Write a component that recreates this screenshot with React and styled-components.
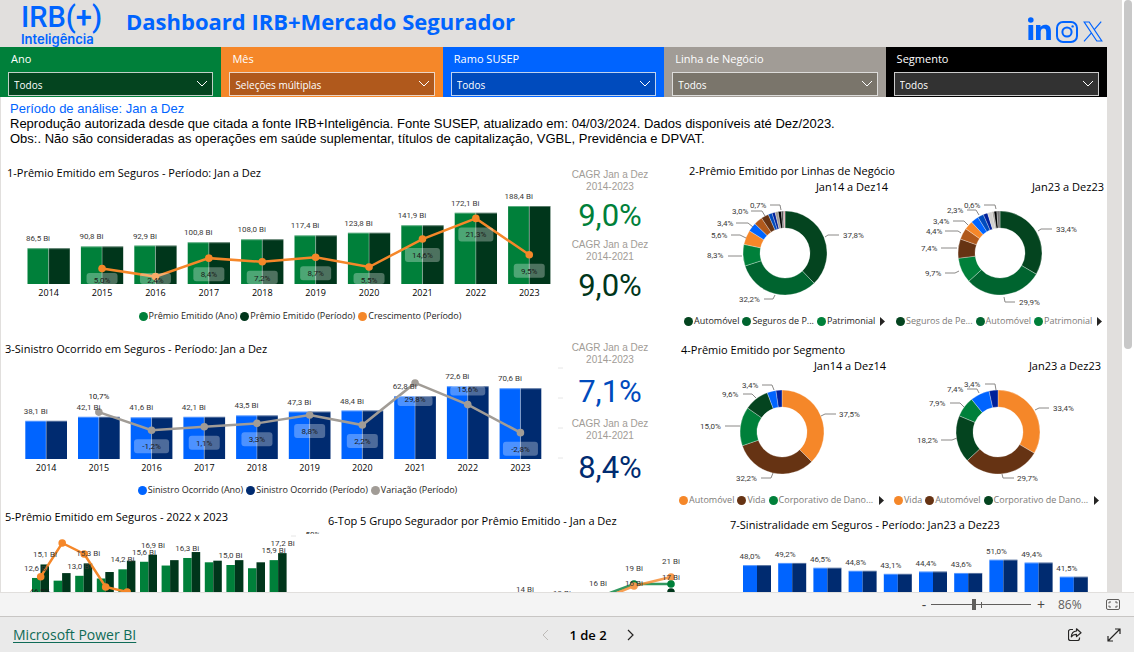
import React, { useState } from "react";
import styled, { createGlobalStyle } from "styled-components";

const GlobalStyle = createGlobalStyle`
  * {
    box-sizing: border-box;
  }
  body {
    margin: 0;
    font-family: "Open Sans", "Noto Sans", sans-serif;
    color: #000;
    background: #fff;
  }
  h1, h2, h3, p {
    margin: 0;
    font-weight: 400;
  }
`;

const GREEN = "#00803a";
const DARK_GREEN = "#00361b";
const ORANGE = "#f58729";
const BLUE = "#0064ff";
const DARK_BLUE = "#002b70";
const GREY = "#a19c96";
const BROWN = "#663313";

const filters = [
  { id: "ano", label: "Ano", value: "Todos", bg: GREEN, box: "#04441f" },
  { id: "mes", label: "Mês", value: "Seleções múltiplas", bg: ORANGE, box: "#b0591c" },
  { id: "ramo", label: "Ramo SUSEP", value: "Todos", bg: BLUE, box: "#004bbd" },
  { id: "linha", label: "Linha de Negócio", value: "Todos", bg: GREY, box: "#7a756b" },
  { id: "segmento", label: "Segmento", value: "Todos", bg: "#000", box: "#323232" },
];

const years = [2014, 2015, 2016, 2017, 2018, 2019, 2020, 2021, 2022, 2023];

const premio = {
  bars: [86.5, 90.8, 92.9, 100.8, 108.0, 117.4, 123.8, 141.9, 172.1, 188.4],
  line: [null, 5.0, 2.4, 8.4, 7.2, 8.7, 5.5, 14.6, 21.3, 9.5],
};

const sinistro = {
  bars: [38.1, 42.1, 41.6, 42.1, 43.5, 47.3, 48.4, 62.8, 72.6, 70.6],
  line: [null, 10.7, -1.2, 1.1, 3.3, 8.8, 2.2, 29.8, 15.6, -2.8],
};

const mensal = {
  a: [12.6, 12.1, 13.0, 12.5, 14.2, 15.6, 14.9, 16.3, 15.5, 15.0, 14.4, 15.9],
  b: [15.1, 13.5, 15.3, 13.7, 15.8, 16.9, 15.9, 17.4, 15.8, 15.9, 15.5, 17.2],
  showA: [0, 2, 4, 5, 7, 9, 11],
  showB: [0, 2, 5, 11],
};

const sinistralidade = [48.0, 49.2, 46.5, 44.8, 43.1, 44.4, 43.6, 51.0, 49.4, 41.5];

// labels: text, x, y and leader line, all measured from the donut centre
const linhas14 = {
  slices: [
    [37.8, "#04441f"], [32.2, "#00642f"], [8.3, GREEN], [5.6, ORANGE], [3.4, BLUE],
    [3.3, "#b0591c"], [2.9, BROWN], [1.5, "#004bbd"], [1.2, "#00209a"], [1.2, GREY],
    [1.2, "#000"], [0.7, "#3b3a39"], [0.4, "#777"], [0.3, "#e07080"],
  ],
  labels: [
    ["37,8%", 58, -18, "40,-16 43,-18 54,-18"],
    ["32,2%", -46, 46, "-21,46 -12,46 -10,42"],
    ["8,3%", -78, 2, "-57,3 -43,3"],
    ["5,6%", -74, -18, "-54,-18 -45,-18 -39,-15"],
    ["3,4%", -68, -30, "-49,-30 -37,-30 -32,-26"],
    ["3,0%", -53, -42, "-34,-42 -23,-42 -20,-37"],
    ["0,7%", -35, -48, "-15,-48 -5,-48 -4,-43"],
  ],
};

const linhas23 = {
  slices: [
    [33.4, "#04441f"], [29.9, "#00642f"], [9.7, GREEN], [7.4, BROWN], [4.4, "#b0591c"],
    [3.4, ORANGE], [3.0, BLUE], [2.3, "#004bbd"], [1.7, "#00209a"], [1.8, "#d2d0ce"],
    [0.7, GREY], [1.1, "#000"], [1.2, "#777"],
  ],
  labels: [
    ["33,4%", 56, -24, "38,-22 41,-24 52,-24"],
    ["29,9%", 19, 49, "4,44 5,49 15,49"],
    ["9,7%", -75, 20, "-55,20 -45,20 -41,18"],
    ["7,4%", -79, -5, "-59,-5 -43,-5"],
    ["4,4%", -74, -22, "-55,-22 -42,-22 -39,-20"],
    ["3,4%", -67, -32, "-47,-32 -36,-32 -32,-28"],
    ["2,3%", -53, -43, "-33,-43 -24,-43 -21,-38"],
    ["0,6%", -36, -48, "-16,-48 -5,-48 -4,-44"],
  ],
};

const segmento14 = {
  slices: [
    [37.5, ORANGE], [32.2, BROWN], [15.0, GREEN], [9.6, "#04441f"], [3.4, BLUE], [2.3, "#00209a"],
  ],
  labels: [
    ["37,5%", 57, -18, "39,-16 43,-18 54,-18"],
    ["32,2%", -46, 46, "-21,46 -11,46 -9,41"],
    ["15,0%", -82, -6, "-57,-6 -42,-6"],
    ["9,6%", -60, -38, "-39,-38 -30,-38 -26,-34"],
    ["3,4%", -40, -47, "-20,-47 -10,-47 -8,-42"],
  ],
};

const segmento23 = {
  slices: [
    [33.4, ORANGE], [29.7, BROWN], [18.2, "#04441f"], [7.9, GREEN], [7.4, BLUE], [3.4, "#00209a"],
  ],
  labels: [
    ["33,4%", 55, -24, "37,-22 41,-24 51,-24"],
    ["29,7%", 19, 46, "4,42 5,46 16,46"],
    ["18,2%", -81, 8, "-57,8 -46,8 -41,6"],
    ["7,9%", -69, -29, "-48,-29 -38,-29 -34,-25"],
    ["7,4%", -51, -43, "-31,-43 -21,-43 -19,-39"],
    ["3,4%", -34, -48, "-13,-48 -3,-48 -2,-42"],
  ],
};

const br = (n) => n.toFixed(1).replace(".", ",");

const ComboChart = ({ data, height, base, left, pitch, width, scale, zero, lineScale, colors, ticks }) => {
  const [colorA, colorB, colorLine] = colors;
  const half = width / 2;
  const points = data.line
    .map((v, i) => v !== null && { v, i, x: left + i * pitch + half, y: zero - v * lineScale })
    .filter(Boolean);

  return (
    <Chart viewBox={`0 0 555 ${height}`} role="img">
      {data.bars.map((v, i) => {
        const x = left + i * pitch;
        const h = v * scale;
        return (
          <g key={years[i]}>
            <rect x={x} y={base - h} width={half} height={h} fill={colorA} />
            <rect x={x + half} y={base - h} width={half} height={h} fill={colorB} />
            <path d={`M${x} ${base - h + 0.5}h${width}M${x + half} ${base - h}v${h}`} stroke="#fff" strokeOpacity="0.35" />
            <AxisText x={x + half} y={base + 12}>{years[i]}</AxisText>
          </g>
        );
      })}
      <polyline points={points.map((p) => `${p.x},${p.y}`).join(" ")} fill="none" stroke={colorLine} strokeWidth="2.5" />
      {points.map((p) => (
        <circle key={p.i} cx={p.x} cy={p.y} r="3.8" fill={colorLine} />
      ))}
      {data.bars.map((v, i) => (
        <DataText key={i} x={left + i * pitch + half / 2} y={base - v * scale - 7}>{br(v)} Bi</DataText>
      ))}
      {points.map((p) => {
        const top = base - data.bars[p.i] * scale;
        const above = p.y < top + 20 && (p.v === 10.7 || p.v === 15.6);
        const cy = above ? p.y - 16 : Math.min(p.y + 16, base - 4);
        const w = br(p.v).length > 3 ? 35 : 31;
        const y1 = Math.max(cy - 7, top);
        const y2 = Math.min(cy + 7, base);
        return (
          <g key={p.i}>
            {y2 > y1 && <rect x={p.x - w / 2} y={y1} width={w} height={y2 - y1} rx="3" fill="#fff" fillOpacity="0.3" />}
            <BadgeText x={p.x} y={cy + 3}>{br(p.v)}%</BadgeText>
          </g>
        );
      })}
      {ticks && <path d="M558 11h5M558 41h5M558 71h5M558 101h5" stroke="#e6e6e6" />}
    </Chart>
  );
};

const arc = (from, to, R, r) => {
  const at = (t, q) => [Math.sin(t * 2 * Math.PI) * q, -Math.cos(t * 2 * Math.PI) * q].map((n) => n.toFixed(2)).join(" ");
  const big = to - from > 0.5 ? 1 : 0;
  return `M${at(from, R)}A${R} ${R} 0 ${big} 1 ${at(to, R)}L${at(to, r)}A${r} ${r} 0 ${big} 0 ${at(from, r)}Z`;
};

const Donut = ({ data, width, cx, cy }) => {
  const total = data.slices.reduce((sum, s) => sum + s[0], 0);
  let sum = 0;
  return (
    <Chart viewBox={`0 0 ${width} 117`} role="img">
      <g transform={`translate(${cx} ${cy})`}>
        {data.slices.map(([v, color], i) => {
          const from = sum / total;
          sum += v;
          return <path key={i} d={arc(from, sum / total, 42, 25)} fill={color} stroke="#fff" strokeWidth="0.3" />;
        })}
        {data.labels.map(([text, x, y, line]) => (
          <g key={text}>
            <polyline points={line} fill="none" stroke="#8a8886" />
            <SliceText x={x} y={y + 3}>{text}</SliceText>
          </g>
        ))}
      </g>
    </Chart>
  );
};

const Legend = ({ items, muted, more, left, right, top }) => (
  <LegendRow $muted={muted} $more={more} $left={left} $right={right} $top={top}>
    {items.map(([text, color]) => (
      <LegendItem key={text} $color={color}>{text}</LegendItem>
    ))}
    {more && (
      <MoreButton aria-label="Mais itens">
        <svg width="5" height="9" viewBox="0 0 5 9"><path d="M0 0L5 4.5L0 9Z" fill="#252423" /></svg>
      </MoreButton>
    )}
  </LegendRow>
);

const DonutCard = ({ title, data, width, cx, cy, pad, left, right, items, muted }) => (
  <div>
    <SubTitle $pad={pad}>{title}</SubTitle>
    <Donut data={data} width={width} cx={cx} cy={cy} />
    <Legend items={items} muted={muted} more left={left} right={right} top={2} />
  </div>
);

const MonthlyChart = () => {
  const y = (v) => 121 - v * 5.4;
  const growth = [[40.7, 51.7], [62.2, 18], [84.2, 29], [105.7, 62], [127.2, 67]];
  return (
    <Chart viewBox="0 0 320 150" role="img">
      {mensal.a.map((v, i) => {
        const x = 32 + i * 21.6;
        return (
          <g key={i}>
            <rect x={x} y={y(v)} width="8.5" height={150 - y(v)} fill={GREEN} />
            <rect x={x + 8.5} y={y(mensal.b[i])} width="8.5" height={150 - y(mensal.b[i])} fill={DARK_GREEN} />
          </g>
        );
      })}
      <polyline points={growth.join(" ")} fill="none" stroke={ORANGE} strokeWidth="2.5" />
      {growth.map(([cx, cy]) => (
        <circle key={cx} cx={cx} cy={cy} r="3.8" fill={ORANGE} />
      ))}
      {mensal.showA.map((i) => (
        <DataText key={i} x={36 + i * 21.6} y={y(mensal.a[i]) - 7}>{br(mensal.a[i])} Bi</DataText>
      ))}
      {mensal.showB.map((i) => (
        <DataText key={i} x={45 + i * 21.6} y={y(mensal.b[i]) - 7}>{br(mensal.b[i])} Bi</DataText>
      ))}
      <BadgeText x="40" y="69">46,5%</BadgeText>
      <path d="M291 11h5" stroke="#e6e6e6" />
      <clipPath id="axis-top"><rect x="300" y="4" width="24" height="5" /></clipPath>
      <g clipPath="url(#axis-top)"><DataText x="313" y="12">50%</DataText></g>
    </Chart>
  );
};

const GroupChart = () => (
  <Chart viewBox="0 0 380 130" role="img">
    <polyline points="233,100 290,64 314,55 351,55" fill="none" stroke={GREEN} strokeWidth="2.5" strokeOpacity="0.8" />
    <polyline points="233,100 297,64 314,57 351,48" fill="none" stroke={ORANGE} strokeWidth="2.5" strokeOpacity="0.8" />
    <circle cx="314" cy="55" r="3.8" fill={GREEN} />
    <circle cx="314" cy="57" r="3.8" fill="#f79a4c" />
    <circle cx="351" cy="48" r="3.8" fill="#f79a4c" />
    <circle cx="351" cy="55" r="3.8" fill={GREEN} />
    <circle cx="351" cy="63" r="3.8" fill={DARK_GREEN} />
    <DataText x="205" y="63">14 Bi</DataText>
    <DataText x="242" y="67">13 Bi</DataText>
    <DataText x="278" y="57">16 Bi</DataText>
    <DataText x="314" y="42">19 Bi</DataText>
    <DataText x="314" y="57">16 Bi</DataText>
    <DataText x="351" y="35">21 Bi</DataText>
    <DataText x="351" y="51">17 Bi</DataText>
  </Chart>
);

const LossChart = () => (
  <Chart viewBox="0 0 407 130" role="img">
    {sinistralidade.map((v, i) => {
      const x = 43 + i * 35.2;
      const top = 118 - v * 1.79;
      return (
        <g key={i}>
          <rect x={x} y={top} width="14" height={130 - top} fill={BLUE} />
          <rect x={x + 14} y={top} width="14" height={130 - top} fill={DARK_BLUE} />
          <path d={`M${x} ${top + 0.5}h28`} stroke="#fff" strokeOpacity="0.35" />
          <DataText x={x + 7} y={top - 6}>{br(v)}%</DataText>
        </g>
      );
    })}
  </Chart>
);

const App = () => {
  const [zoom, setZoom] = useState(43);

  return (
    <Page>
      <GlobalStyle />
      <Viewport>
        <Canvas>
          <Header>
            <Logo>
              <LogoName>IRB(+)</LogoName>
              <LogoSub>Inteligência</LogoSub>
            </Logo>
            <Title>Dashboard IRB+Mercado Segurador</Title>
            <Social>
              <a href="#linkedin" aria-label="LinkedIn">
                <svg width="23" height="26" viewBox="0 0 23 26" fill={BLUE}>
                  <circle cx="2.8" cy="3" r="2.8" />
                  <path d="M0.4 8h4.8v15H0.4zM8 8h4.5v2.1c.8-1.5 2.4-2.4 4.6-2.4 4.3 0 5.8 2.4 5.8 6.8V23h-4.7v-7.7c0-2.2-.5-3.8-2.5-3.8-2.2 0-3 1.5-3 3.8V23H8z" />
                </svg>
              </a>
              <a href="#instagram" aria-label="Instagram">
                <svg width="22" height="22" viewBox="0 0 22 22" fill="none" stroke={BLUE} strokeWidth="2">
                  <rect x="1" y="1" width="20" height="20" rx="6" />
                  <circle cx="11" cy="11" r="4.6" />
                  <circle cx="16.6" cy="5.4" r="1.2" fill={BLUE} stroke="none" />
                </svg>
              </a>
              <a href="#x" aria-label="X">
                <svg width="20" height="22" viewBox="0 0 20 22" fill="none" stroke={BLUE} strokeWidth="1.2">
                  <path d="M1.2 1h5L18.8 20h-5zM18.2 0.7L11.3 8.7M8.5 11.9L1 20.3" />
                </svg>
              </a>
            </Social>
          </Header>

          <FilterBar>
            {filters.map((f) => (
              <Filter key={f.id} $bg={f.bg}>
                <label htmlFor={f.id}>{f.label}</label>
                <SelectBox>
                  <Select id={f.id} $bg={f.box} defaultValue={f.value}>
                    <option>{f.value}</option>
                  </Select>
                  <Chevron viewBox="0 0 12 7"><path d="M1 1l5 5 5-5" /></Chevron>
                </SelectBox>
              </Filter>
            ))}
          </FilterBar>

          <Report>
            <Info>
              <Period>Período de análise: Jan a Dez</Period>
              <p>Reprodução autorizada desde que citada a fonte IRB+Inteligência. Fonte SUSEP, atualizado em: 04/03/2024. Dados disponíveis até Dez/2023.</p>
              <p>Obs:. Não são consideradas as operações em saúde suplementar, títulos de capitalização, VGBL, Previdência e DPVAT.</p>
            </Info>

            <MainGrid>
              <Panel $top={5}>
                <PanelTitle $left={7}>1-Prêmio Emitido em Seguros - Período: Jan a Dez</PanelTitle>
                <ComboChart
                  data={premio} height={120} base={103} left={27.5} pitch={53.4} width={42.3}
                  scale={0.414} zero={103} lineScale={3.08} colors={[GREEN, DARK_GREEN, ORANGE]}
                />
                <Legend
                  top={8}
                  left={45}
                  items={[["Prêmio Emitido (Ano)", GREEN], ["Prêmio Emitido (Período)", DARK_GREEN], ["Crescimento (Período)", ORANGE]]}
                />
              </Panel>
              <Kpis>
                <KpiLabel>CAGR Jan a Dez<br />2014-2023</KpiLabel>
                <KpiValue $color={GREEN}>9,0%</KpiValue>
                <KpiLabel>CAGR Jan a Dez<br />2014-2021</KpiLabel>
                <KpiValue $color={DARK_GREEN}>9,0%</KpiValue>
              </Kpis>
              <Panel $top={3}>
                <PanelTitle $left={24}>2-Prêmio Emitido por Linhas de Negócio</PanelTitle>
                <DonutPair>
                  <DonutCard
                    title="Jan14 a Dez14" data={linhas14} width={224} cx={120} cy={58} pad={1} left={19} right={4}
                    items={[["Automóvel", "#04441f"], ["Seguros de P...", "#00642f"], ["Patrimonial", GREEN]]}
                  />
                  <DonutCard
                    title="Jan23 a Dez23" data={linhas23} width={218} cx={111} cy={58} pad={3} left={7} right={5} muted
                    items={[["Seguros de Pe...", "#04441f"], ["Automóvel", "#00642f"], ["Patrimonial", GREEN]]}
                  />
                </DonutPair>
              </Panel>

              <Panel $top={8}>
                <PanelTitle $left={5}>3-Sinistro Ocorrido em Seguros - Período: Jan a Dez</PanelTitle>
                <ComboChart
                  data={sinistro} height={118} base={102} left={25.3} pitch={52.7} width={41.7}
                  scale={1.002} zero={71.4} lineScale={1.525} colors={[BLUE, DARK_BLUE, GREY]} ticks
                />
                <Legend
                  top={8}
                  left={40}
                  items={[["Sinistro Ocorrido (Ano)", BLUE], ["Sinistro Ocorrido (Período)", DARK_BLUE], ["Variação (Período)", GREY]]}
                />
              </Panel>
              <Kpis $tall>
                <KpiLabel>CAGR Jan a Dez<br />2014-2023</KpiLabel>
                <KpiValue $color="#004bbd">7,1%</KpiValue>
                <KpiLabel>CAGR Jan a Dez<br />2014-2021</KpiLabel>
                <KpiValue $color={DARK_BLUE}>8,4%</KpiValue>
              </Kpis>
              <Panel $top={9}>
                <PanelTitle $left={16}>4-Prêmio Emitido por Segmento</PanelTitle>
                <DonutPair>
                  <DonutCard
                    title="Jan14 a Dez14" data={segmento14} width={224} cx={117} cy={58} pad={3} left={14} right={5} muted
                    items={[["Automóvel", ORANGE], ["Vida", BROWN], ["Corporativo de Dano...", GREEN]]}
                  />
                  <DonutCard
                    title="Jan23 a Dez23" data={segmento23} width={218} cx={109} cy={58} pad={6} left={5} right={8} muted
                    items={[["Vida", ORANGE], ["Automóvel", BROWN], ["Corporativo de Dano...", "#04441f"]]}
                  />
                </DonutPair>
              </Panel>
            </MainGrid>

            <BottomGrid>
              <Panel $top={2}>
                <PanelTitle $left={5}>5-Prêmio Emitido em Seguros - 2022 x 2023</PanelTitle>
                <MonthlyChart />
              </Panel>
              <Panel $top={6}>
                <PanelTitle $left={8}>6-Top 5 Grupo Segurador por Prêmio Emitido - Jan a Dez</PanelTitle>
                <GroupChart />
              </Panel>
              <Panel $top={10}>
                <PanelTitle $left={30}>7-Sinistralidade em Seguros - Período: Jan23 a Dez23</PanelTitle>
                <LossChart />
              </Panel>
            </BottomGrid>
          </Report>
        </Canvas>
        <Rail><Thumb /></Rail>
      </Viewport>

      <ZoomBar>
        <ZoomButton aria-label="Reduzir" onClick={() => setZoom(zoom - 5)}>-</ZoomButton>
        <Slider type="range" aria-label="Zoom" value={zoom} onChange={(e) => setZoom(Number(e.target.value))} />
        <ZoomButton aria-label="Ampliar" onClick={() => setZoom(zoom + 5)}>+</ZoomButton>
        <Percent>86%</Percent>
        <IconButton aria-label="Ajustar à página">
          <svg width="14" height="11" viewBox="0 0 14 11" fill="none" stroke="#605e5c">
            <rect x="0.5" y="0.5" width="13" height="10" rx="1.5" />
            <path d="M3 4.5v-1.5h2M9 3h2v1.5M11 6.5v1.5H9M5 8H3V6.5" />
          </svg>
        </IconButton>
      </ZoomBar>

      <Footer>
        <BrandLink href="#powerbi">Microsoft Power BI</BrandLink>
        <Pager>
          <IconButton aria-label="Página anterior" disabled>
            <svg width="7" height="12" viewBox="0 0 7 12" fill="none" stroke="#bebbb8"><path d="M6 1L1 6l5 5" /></svg>
          </IconButton>
          <span>1 de 2</span>
          <IconButton aria-label="Próxima página">
            <svg width="7" height="12" viewBox="0 0 7 12" fill="none" stroke="#252423" strokeWidth="1.2"><path d="M1 1l5 5-5 5" /></svg>
          </IconButton>
        </Pager>
        <Actions>
          <IconButton aria-label="Compartilhar">
            <svg width="14" height="13" viewBox="0 0 14 13" fill="none" stroke="#252423" strokeWidth="1.2" strokeLinejoin="round">
              <path d="M5 1.5H2.5a2 2 0 0 0-2 2v7a2 2 0 0 0 2 2h7a2 2 0 0 0 2-2V9.5" />
              <path d="M8.5 0.8L13 4.8 8.5 8.6V6.4C6 6.3 4.5 7 3.3 8.8 3.5 5.5 5.3 3.3 8.5 3z" />
            </svg>
          </IconButton>
          <IconButton aria-label="Tela cheia">
            <svg width="14" height="14" viewBox="0 0 14 14" fill="none" stroke="#252423" strokeWidth="1.2">
              <path d="M8 1h5v5M13 1L1 13M1 8v5h5" />
            </svg>
          </IconButton>
        </Actions>
      </Footer>
    </Page>
  );
};

const Page = styled.div`
  height: 100vh;
  display: flex;
  flex-direction: column;
`;

const Viewport = styled.main`
  flex: 1;
  min-height: 0;
  display: flex;
  overflow: hidden;
`;

const Canvas = styled.div`
  flex: 1;
  min-width: 0;
  padding-right: 15px;
  background: #e1dfdd;
`;

const Header = styled.header`
  height: 47px;
  display: flex;
  align-items: center;
  padding: 0 4px 0 21px;
`;

const Logo = styled.div`
  width: 105px;
  color: ${BLUE};
  font-family: Roboto, sans-serif;
`;

const LogoName = styled.div`
  font-size: 29px;
  font-weight: 500;
  line-height: 30px;
`;

const LogoSub = styled.div`
  font-family: Inter, sans-serif;
  font-size: 13px;
  font-weight: 600;
  line-height: 14px;
`;

const Title = styled.h1`
  flex: 1;
  padding-bottom: 6px;
  color: ${BLUE};
  font-size: 22px;
  font-weight: 700;
  line-height: 30px;
`;

const Social = styled.nav`
  display: flex;
  align-items: flex-end;
  gap: 5px;
  padding-top: 13px;
  a {
    display: flex;
  }
`;

const FilterBar = styled.form`
  display: grid;
  grid-template-columns: repeat(5, minmax(0, 1fr));
`;

const Filter = styled.div`
  height: 50px;
  padding: 4px 8px 0;
  background: ${(p) => p.$bg};
  color: #fff;
  label {
    display: block;
    padding-left: 3px;
    font-size: 11px;
    line-height: 16px;
  }
`;

const SelectBox = styled.div`
  position: relative;
  margin-top: 5px;
`;

const Select = styled.select`
  display: block;
  width: 100%;
  height: 24px;
  padding: 2px 20px 0 5px;
  appearance: none;
  border: 1px solid rgba(255, 255, 255, 0.75);
  border-radius: 0;
  background: ${(p) => p.$bg};
  color: #fff;
  font-family: inherit;
  font-size: 10px;
`;

const Chevron = styled.svg`
  position: absolute;
  right: 5px;
  top: 8px;
  width: 12px;
  height: 7px;
  fill: none;
  stroke: #fff;
  pointer-events: none;
`;

const Report = styled.div`
  background: #fff;
  box-shadow: inset 1px 0 #e1dfdd;
`;

const Info = styled.div`
  padding: 4px 10px 14px;
  font-family: "Liberation Sans", sans-serif;
  font-size: 13px;
  line-height: 15px;
`;

const Period = styled.p`
  color: ${BLUE};
`;

const MainGrid = styled.div`
  display: grid;
  grid-template-columns: minmax(0, 555fr) minmax(0, 110fr) minmax(0, 442fr);
`;

const BottomGrid = styled.div`
  display: grid;
  grid-template-columns: minmax(0, 320fr) minmax(0, 380fr) minmax(0, 407fr);
`;

const Panel = styled.section`
  padding-top: ${(p) => p.$top}px;
`;

const PanelTitle = styled.h2`
  padding-left: ${(p) => p.$left}px;
  font-size: 11px;
  line-height: 16px;
  white-space: nowrap;
`;

const DonutPair = styled.div`
  display: grid;
  grid-template-columns: minmax(0, 224fr) minmax(0, 218fr);
`;

const SubTitle = styled.h3`
  padding-right: ${(p) => p.$pad}px;
  font-size: 11px;
  line-height: 16px;
  text-align: right;
`;

const Chart = styled.svg`
  display: block;
  width: 100%;
  overflow: visible;
`;

const AxisText = styled.text`
  font-size: 9px;
  text-anchor: middle;
`;

const DataText = styled.text`
  font-family: Roboto, sans-serif;
  font-size: 8px;
  text-anchor: middle;
  fill: #3b3a39;
`;

const BadgeText = styled(DataText)`
  fill: #1b1a19;
`;

const SliceText = styled(DataText)`
  text-anchor: start;
`;

const LegendRow = styled.div`
  display: flex;
  align-items: center;
  justify-content: ${(p) => (p.$more ? "flex-start" : "center")};
  gap: 3px;
  height: 14px;
  margin-top: ${(p) => p.$top}px;
  padding: 0 ${(p) => p.$right || 0}px 0 ${(p) => p.$left || 0}px;
  color: ${(p) => (p.$muted ? "#7d7a77" : "#252423")};
  font-size: 9px;
  line-height: 14px;
  white-space: nowrap;
`;

const LegendItem = styled.span`
  display: flex;
  align-items: center;
  gap: 1px;
  &::before {
    content: "";
    width: 9px;
    height: 9px;
    border-radius: 50%;
    background: ${(p) => p.$color};
  }
`;

const MoreButton = styled.button`
  display: flex;
  margin-left: auto;
  padding: 0;
  border: 0;
  background: none;
`;

const Kpis = styled.section`
  --value-height: ${(p) => (p.$tall ? 52 : 46)}px;
  padding: 9px 0 ${(p) => (p.$tall ? 11 : 24)}px;
  text-align: center;
`;

const KpiLabel = styled.p`
  color: ${GREY};
  font-family: "Liberation Sans", sans-serif;
  font-size: 10px;
  line-height: 12px;
`;

const KpiValue = styled.p`
  color: ${(p) => p.$color};
  font-family: Roboto, sans-serif;
  font-size: 31px;
  line-height: var(--value-height);
`;

const Rail = styled.div`
  width: 12px;
  padding: 0 2px;
  background: #fff;
`;

const Thumb = styled.div`
  height: 59%;
  border-radius: 4px;
  background: #c8c8c8;
`;

const ZoomBar = styled.div`
  flex-shrink: 0;
  display: flex;
  align-items: center;
  justify-content: flex-end;
  height: 24px;
  padding-right: 14px;
  border-top: 1px solid #e1dfdd;
  background: #f4f4f4;
  color: #605e5c;
`;

const ZoomButton = styled.button`
  width: 14px;
  padding: 0;
  border: 0;
  background: none;
  color: #484644;
  font-family: inherit;
  font-size: 14px;
  line-height: 20px;
`;

const Slider = styled.input`
  width: 100px;
  height: 12px;
  margin: 0 3px 0 0;
  appearance: none;
  background:
    linear-gradient(#605e5c, #605e5c) 50px 50% / 1px 6px no-repeat,
    linear-gradient(#605e5c, #605e5c) 0 50% / 100% 1px no-repeat;
  &::-webkit-slider-thumb {
    appearance: none;
    width: 4px;
    height: 11px;
    background: #605e5c;
  }
`;

const Percent = styled.span`
  width: 58px;
  padding-left: 10px;
  font-size: 12px;
`;

const IconButton = styled.button`
  display: flex;
  padding: 0;
  border: 0;
  background: none;
`;

const Footer = styled.footer`
  flex-shrink: 0;
  display: grid;
  grid-template-columns: 1fr auto 1fr;
  align-items: center;
  height: 36px;
  padding: 0 13px;
  border-top: 1px solid #c8c6c4;
  background: #eaeaea;
`;

const BrandLink = styled.a`
  color: #0f6b57;
  font-size: 14px;
  text-underline-offset: 2px;
`;

const Pager = styled.nav`
  display: flex;
  align-items: center;
  gap: 20px;
  padding-left: 42px;
  font-size: 13px;
  font-weight: 600;
`;

const Actions = styled.div`
  display: flex;
  align-items: center;
  justify-content: flex-end;
  gap: 25px;
`;

export default App;
